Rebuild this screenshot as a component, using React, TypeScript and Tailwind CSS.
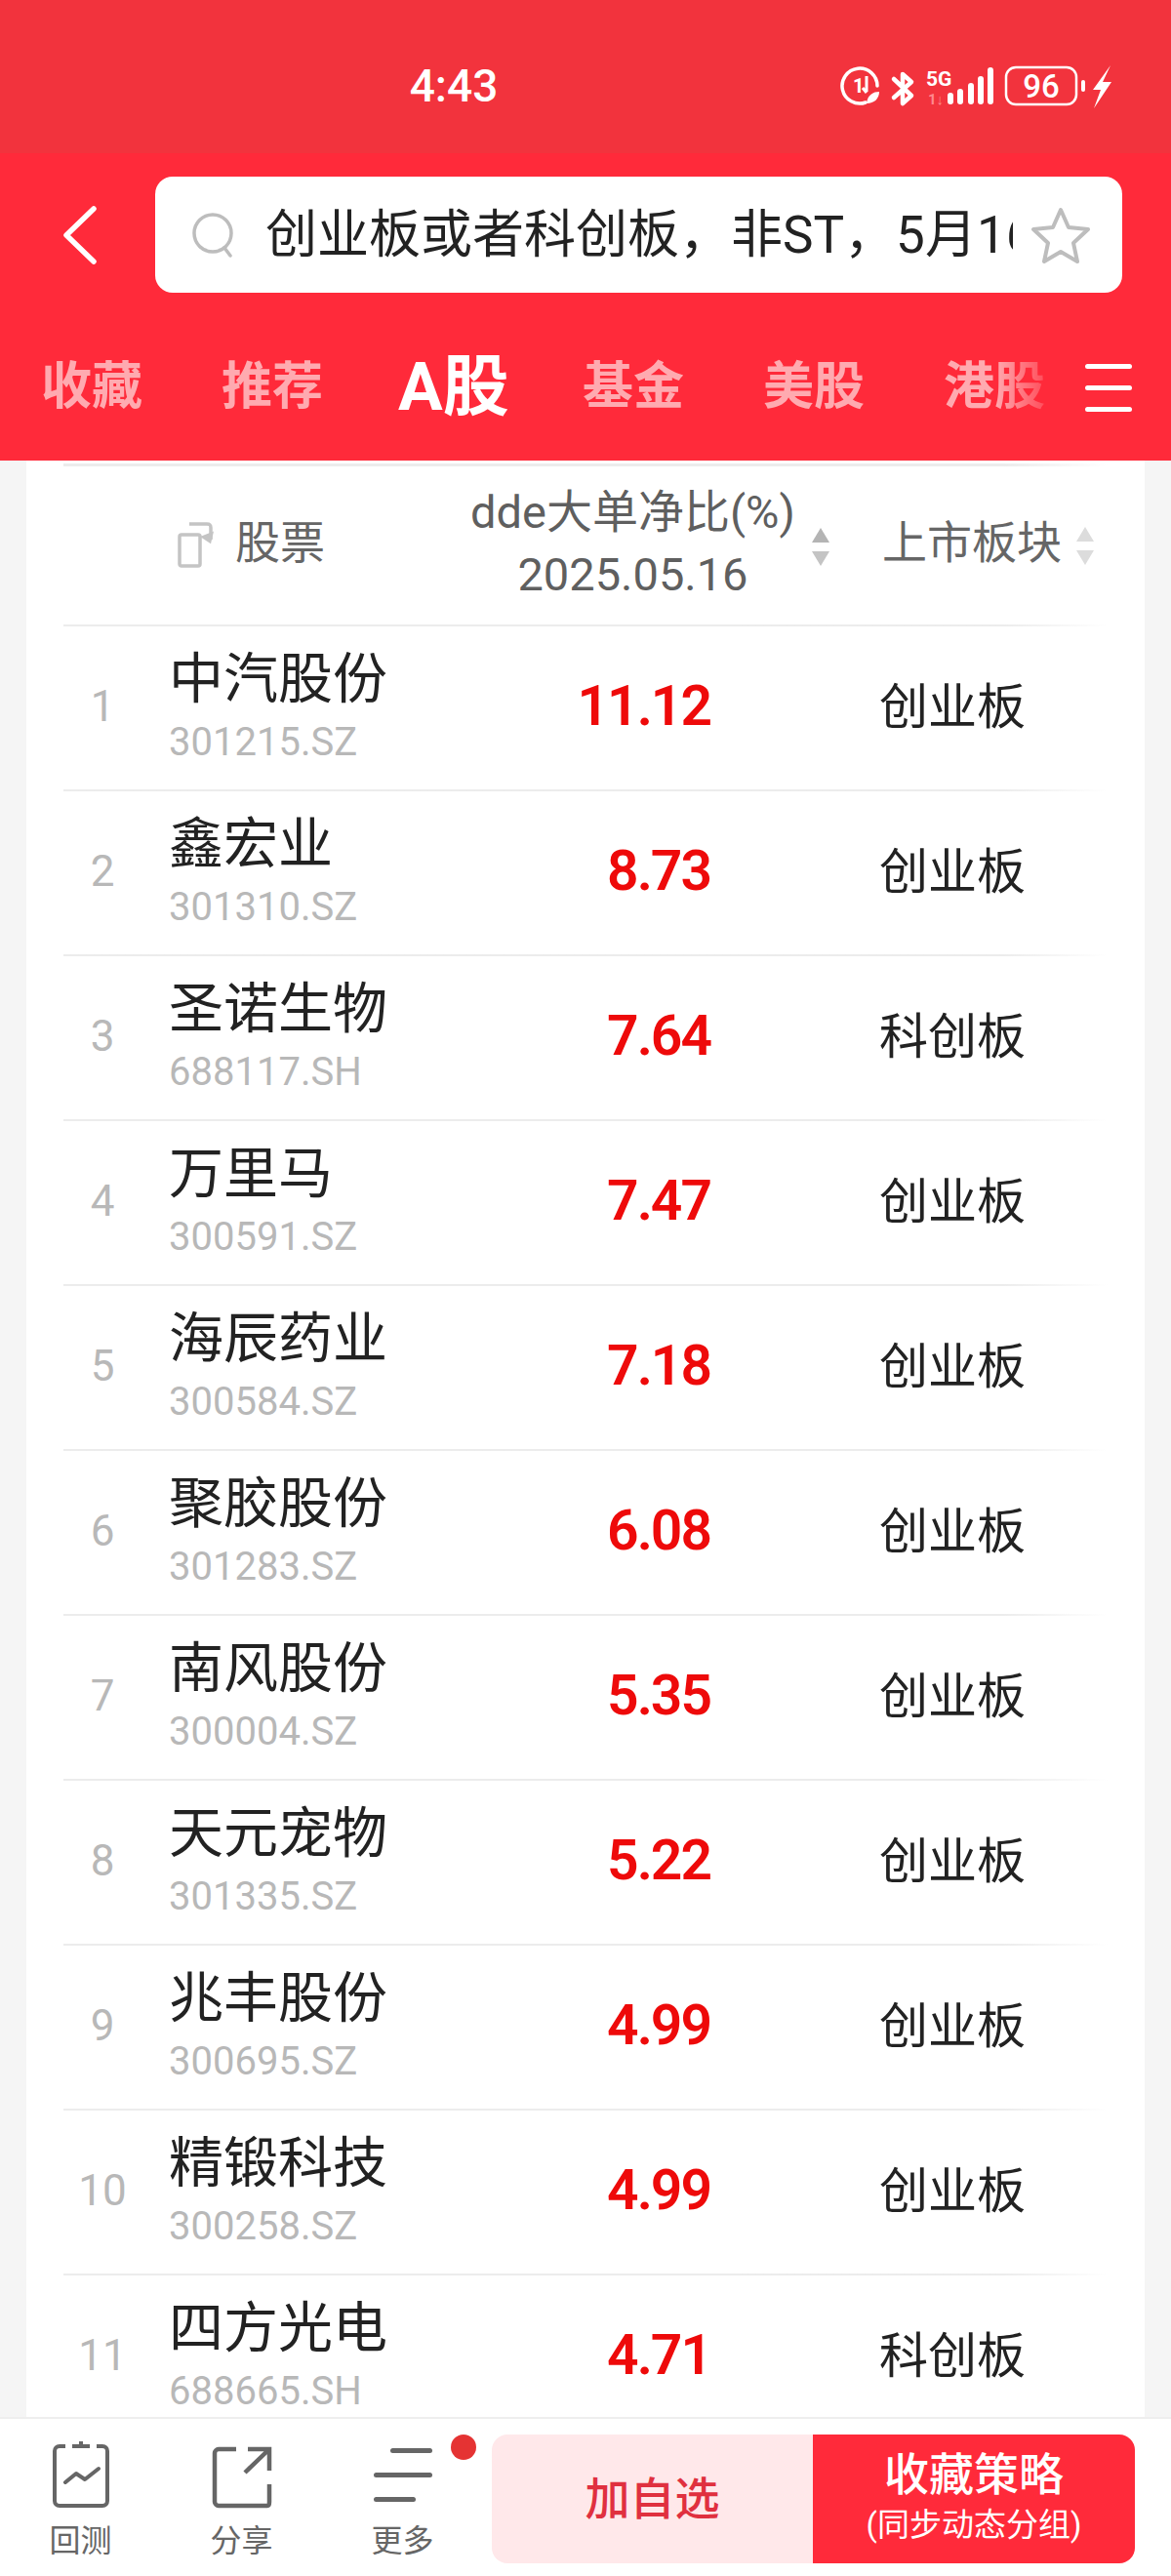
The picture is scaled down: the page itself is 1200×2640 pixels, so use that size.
import React from "react";

const stocks = [
  { rank: 1, name: "中汽股份", code: "301215.SZ", value: "11.12", board: "创业板" },
  { rank: 2, name: "鑫宏业", code: "301310.SZ", value: "8.73", board: "创业板" },
  { rank: 3, name: "圣诺生物", code: "688117.SH", value: "7.64", board: "科创板" },
  { rank: 4, name: "万里马", code: "300591.SZ", value: "7.47", board: "创业板" },
  { rank: 5, name: "海辰药业", code: "300584.SZ", value: "7.18", board: "创业板" },
  { rank: 6, name: "聚胶股份", code: "301283.SZ", value: "6.08", board: "创业板" },
  { rank: 7, name: "南风股份", code: "300004.SZ", value: "5.35", board: "创业板" },
  { rank: 8, name: "天元宠物", code: "301335.SZ", value: "5.22", board: "创业板" },
  { rank: 9, name: "兆丰股份", code: "300695.SZ", value: "4.99", board: "创业板" },
  { rank: 10, name: "精锻科技", code: "300258.SZ", value: "4.99", board: "创业板" },
  { rank: 11, name: "四方光电", code: "688665.SH", value: "4.71", board: "科创板" },
];

const tabs = ["收藏", "推荐", "A股", "基金", "美股", "港股"];

function StatusIcons() {
  return (
    <svg width="280" height="55" viewBox="0 0 280 55" fill="none">
      {/* data saver */}
      <path d="M27 45 A18 18 0 1 1 39 28" stroke="#fff" strokeWidth="3.5" strokeLinecap="round" />
      <text x="14" y="35" fill="#fff" fontSize="20" fontWeight="700" fontFamily="Roboto">1</text>
      <path d="M28 18v16M24 30l4 5" stroke="#fff" strokeWidth="3" />
      <path d="M28 46c1-9 7-12 13-12 0 7-5 12-13 12z" fill="#fff" />
      {/* bluetooth */}
      <path d="M56 21l18 17-9 8V16l9 8-18 16" stroke="#fff" strokeWidth="4.5" strokeLinecap="round" strokeLinejoin="round" />
      {/* 5G */}
      <text x="89" y="28" fill="#fff" fontSize="21" fontWeight="700" fontFamily="Roboto">5G</text>
      <text x="91" y="47" fill="#ff8a8f" fontSize="15" fontWeight="700" fontFamily="Roboto">1↓</text>
      {/* signal */}
      <rect x="111" y="35" width="6" height="12" rx="3" fill="#fff" />
      <rect x="121" y="31" width="6" height="16" rx="3" fill="#fff" />
      <rect x="132" y="25" width="6" height="22" rx="3" fill="#fff" />
      <rect x="142" y="18" width="6" height="29" rx="3" fill="#fff" />
      <rect x="152" y="9" width="6" height="38" rx="3" fill="#fff" />
      {/* battery */}
      <rect x="171" y="9" width="72" height="38" rx="10" stroke="#fff" strokeWidth="2.5" />
      <text x="207" y="40" textAnchor="middle" fill="#fff" fontSize="33" fontWeight="500" fontFamily="Roboto">96</text>
      <rect x="248" y="22" width="4" height="12" rx="2" fill="#fff" />
      <path d="M278 7l-18 25h8l-7 19 18-27h-9l8-17z" fill="#fff" />
    </svg>
  );
}

function SortArrows({ light }: { light?: boolean }) {
  return (
    <svg width="20" height="40" viewBox="0 0 20 40">
      <path d="M10 0l9 15H1z" fill={light ? "#dcdcdc" : "#b4b4b4"} />
      <path d="M10 39L1 24h18z" fill={light ? "#dcdcdc" : "#c4c4c4"} />
    </svg>
  );
}

function StockRow({ stock }: { stock: (typeof stocks)[number] }) {
  return (
    <div className="flex h-[167px] shrink-0 items-center">
      <div className="mb-[4px] w-[80px] text-center text-[44px] text-[#b8b8b8]">{stock.rank}</div>
      <div className="ml-[28px] w-[360px]">
        <div className="mt-[-4px] text-[56px] leading-[66px] text-[#222]">{stock.name}</div>
        <div className="mt-[9px] text-[40px] leading-[46px] text-[#b8b8b8]">{stock.code}</div>
      </div>
      <div className="mb-[4px] w-[195px] text-right text-[57px] font-semibold tracking-[-2px] text-[#ee0a0a]">{stock.value}</div>
      <div className="mb-[1px] ml-[173px] text-[50px] text-[#222]">{stock.board}</div>
    </div>
  );
}

function Divider() {
  return <div className="h-[2px] shrink-0 bg-gradient-to-r from-[#ececec] from-90% to-transparent" />;
}

export default function App(): React.ReactElement {
  return (
    <div className="flex h-[2640px] w-[1200px] flex-col overflow-hidden bg-[#f5f5f5] font-['Roboto','Noto_Sans_CJK_SC',sans-serif]">
      {/* Status bar */}
      <div className="relative flex h-[157px] shrink-0 items-center bg-[#f2333d] pt-[20px]">
        <div className="w-[930px] text-center text-[46px] font-medium text-white">4:43</div>
        <div className="absolute left-[860px] top-[60px]">
          <StatusIcons />
        </div>
      </div>

      {/* Search header */}
      <div className="h-[315px] shrink-0 bg-[#ff2a3a]">
        <div className="flex items-center pt-[24px]">
          <div className="flex w-[159px] justify-start pl-[62px]">
            <svg width="38" height="60" viewBox="0 0 38 60" fill="none">
              <path d="M34 3L6 30l28 27" stroke="#fff" strokeWidth="5.5" strokeLinecap="round" strokeLinejoin="round" />
            </svg>
          </div>
          <div className="flex h-[119px] w-[991px] items-center rounded-[18px] bg-white pl-[37px] pr-[32px]">
            <svg width="48" height="48" viewBox="0 0 48 48" fill="none" className="shrink-0">
              <circle cx="22" cy="22" r="19" stroke="#bdbdbd" strokeWidth="3.5" />
              <path d="M34 37l6 8" stroke="#bdbdbd" strokeWidth="3.5" strokeLinecap="round" />
            </svg>
            <div className="ml-[28px] w-[766px] overflow-hidden whitespace-nowrap text-[53px] leading-[70px] text-[#222]">
              创业板或者科创板，非ST，5月16日dde大单净比
            </div>
            <svg width="62" height="60" viewBox="0 0 62 60" fill="none" className="ml-[18px] shrink-0">
              <path d="M31 4l8 18 20 2-15 14 4 19-17-10-17 10 4-19L3 24l20-2z" stroke="#bdbdbd" strokeWidth="4" strokeLinejoin="round" />
            </svg>
          </div>
        </div>

        {/* Tabs */}
        <div className="relative mt-[56px] flex h-[82px] items-center">
          <div className="flex w-[1090px] items-center overflow-hidden pl-[42px]">
            {tabs.map((tab) => (
              <div
                key={tab}
                className={
                  tab === "A股"
                    ? "-ml-[4px] mr-[4px] w-[185px] shrink-0 text-[68px] font-bold leading-[82px] text-white"
                    : "w-[185px] shrink-0 text-[52px] font-bold leading-[82px] text-[#ffaab0]"
                }
              >
                {tab}
              </div>
            ))}
          </div>
          <div className="absolute left-[1020px] top-0 h-[82px] w-[70px] bg-gradient-to-r from-transparent to-[#ff2a3a]" />
          <div className="flex flex-col gap-[17px] pl-[22px]">
            <div className="h-[5px] w-[48px] rounded-full bg-white" />
            <div className="h-[5px] w-[48px] rounded-full bg-white" />
            <div className="h-[5px] w-[48px] rounded-full bg-white" />
          </div>
        </div>
      </div>

      {/* Result table */}
      <div className="mx-[27px] flex min-h-0 flex-1 flex-col overflow-hidden bg-white px-[38px]">
        <div className="mt-[3px] h-[3px] shrink-0 bg-gradient-to-r from-[#ececec] from-90% to-transparent" />
        <div className="flex h-[162px] shrink-0 items-center pb-[5px] text-[46px] text-[#666]">
          <svg width="42" height="48" viewBox="0 0 42 48" fill="none" className="ml-[117px] mt-[2px] shrink-0">
            <rect x="2" y="14" width="21" height="32" rx="2" stroke="#c4c4c4" strokeWidth="3.5" />
            <path d="M12 3h18c3 0 4 1 4 4v12" stroke="#c4c4c4" strokeWidth="3.5" />
            <path d="M27 20l14-6-3 14z" fill="#c4c4c4" transform="translate(-4 -2) scale(1 .9)" />
          </svg>
          <div className="ml-[17px] w-[238px] shrink-0">股票</div>
          <div className="w-[339px] shrink-0 text-center text-[47px] leading-[64px] text-[#5f5f5f]">
            <div>dde大单净比(%)</div>
            <div>2025.05.16</div>
          </div>
          <div className="ml-[13px] mt-[8px]">
            <SortArrows />
          </div>
          <div className="ml-[53px] whitespace-nowrap">上市板块</div>
          <div className="ml-[14px] mt-[6px]">
            <SortArrows light />
          </div>
        </div>
        <Divider />
        {stocks.map((stock) => (
          <React.Fragment key={stock.rank}>
            <StockRow stock={stock} />
            <Divider />
          </React.Fragment>
        ))}
      </div>

      {/* Bottom toolbar */}
      <div className="flex h-[163px] shrink-0 border-t-2 border-[#eeeeee] bg-white">
        <div className="flex w-[504px]">
          <div className="flex w-[165px] flex-col items-center pt-[22px]">
            <svg width="60" height="70" viewBox="0 0 60 70" fill="none">
              <path d="M14 6H8c-3 0-5 2-5 5v51c0 3 2 5 5 5h44c3 0 5-2 5-5V11c0-3-2-5-5-5h-6" stroke="#666" strokeWidth="4" />
              <path d="M21 6h18M30 1v5" stroke="#666" strokeWidth="4" />
              <path d="M14 43l11-9 9 6 14-11" stroke="#666" strokeWidth="4" strokeLinecap="round" strokeLinejoin="round" />
            </svg>
            <div className="mt-[15px] text-[32px] leading-[36px] text-[#666]">回测</div>
          </div>
          <div className="flex w-[165px] flex-col items-center pt-[22px]">
            <svg width="62" height="70" viewBox="0 0 62 70" fill="none">
              <path d="M25 9H7c-2 0-4 2-4 4v50c0 2 2 4 4 4h50c2 0 2-2 2-4V45" stroke="#666" strokeWidth="4.5" />
              <path d="M37 9h22v22M59 9L34 33" stroke="#666" strokeWidth="4.5" />
            </svg>
            <div className="mt-[15px] text-[32px] leading-[36px] text-[#666]">分享</div>
          </div>
          <div className="relative flex w-[165px] flex-col items-center pt-[22px]">
            <div className="flex h-[70px] w-[60px] flex-col items-end justify-center gap-[20px]">
              <div className="h-[5px] w-[43px] rounded-full bg-[#666]" />
              <div className="h-[5px] w-[60px] rounded-full bg-[#666]" />
              <div className="mr-[17px] h-[5px] w-[43px] rounded-full bg-[#666]" />
            </div>
            <div className="mt-[15px] text-[32px] leading-[36px] text-[#666]">更多</div>
            <div className="absolute left-[132px] top-[16px] h-[26px] w-[26px] rounded-full bg-[#e53333]" />
          </div>
        </div>
        <div className="mt-[16px] flex h-[132px] w-[659px] overflow-hidden rounded-[16px]">
          <div className="flex w-[329px] items-center justify-center bg-[#ffe8ea] text-[46px] font-medium text-[#e0303f]">
            加自选
          </div>
          <div className="flex w-[330px] flex-col items-center justify-center bg-[#ff2a3a] pb-[6px] text-white">
            <div className="text-[46px] font-medium leading-[60px]">收藏策略</div>
            <div className="text-[33px] leading-[44px]">(同步动态分组)</div>
          </div>
        </div>
      </div>
    </div>
  );
}
